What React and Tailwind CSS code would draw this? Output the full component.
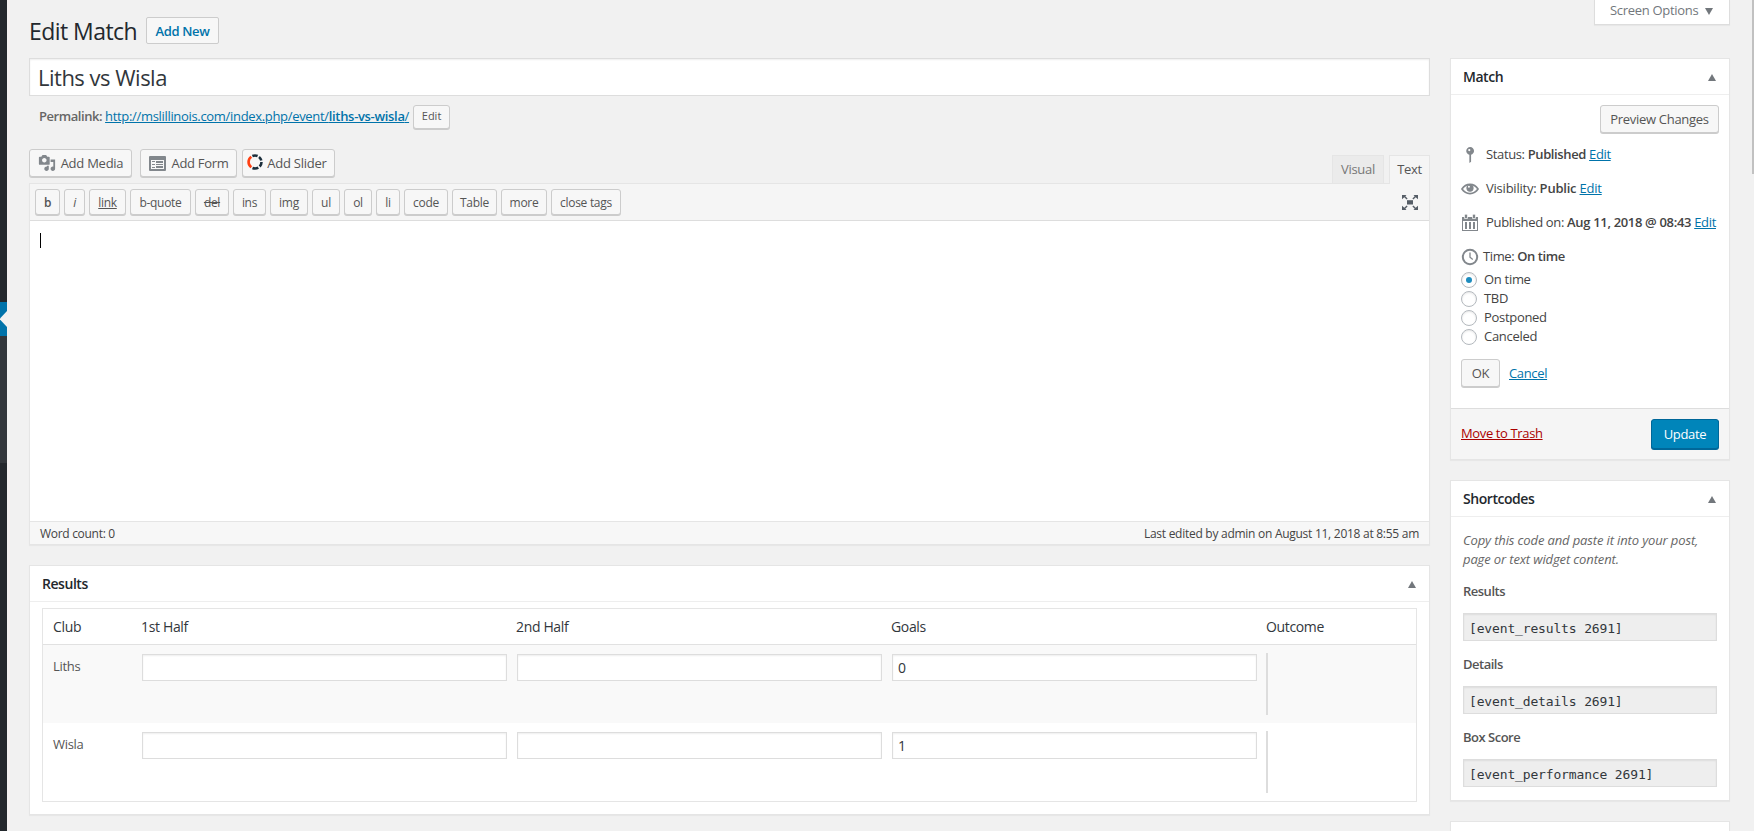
import React, { useState } from 'react';

const quickTags = [
  { label: 'b', width: 'w-[25px]', style: 'font-semibold' },
  { label: 'i', width: 'w-[21px]', style: 'italic' },
  { label: 'link', width: 'w-[37px]', style: 'underline' },
  { label: 'b-quote', width: 'w-[61px]' },
  { label: 'del', width: 'w-[34px]', style: 'line-through' },
  { label: 'ins', width: 'w-[33px]' },
  { label: 'img', width: 'w-[38px]' },
  { label: 'ul', width: 'w-[28px]' },
  { label: 'ol', width: 'w-[28px]' },
  { label: 'li', width: 'w-[24px]' },
  { label: 'code', width: 'w-[44px]' },
  { label: 'Table', width: 'w-[45px]' },
  { label: 'more', width: 'w-[46px]' },
  { label: 'close tags', width: 'w-[70px]' },
];

const clubs = [
  { name: 'Liths', first: '', second: '', goals: '0' },
  { name: 'Wisla', first: '', second: '', goals: '1' },
];

const statuses = ['On time', 'TBD', 'Postponed', 'Canceled'];

const shortcodes = [
  { label: 'Results', code: '[event_results 2691]' },
  { label: 'Details', code: '[event_details 2691]' },
  { label: 'Box Score', code: '[event_performance 2691]' },
];

const button = 'flex items-center justify-center rounded-[3px] border border-[#ccc] bg-[#f7f7f7] text-[#555] shadow-[0_1px_0_#ccc] whitespace-nowrap';
const box = 'border border-[#e5e5e5] bg-white shadow-[0_1px_1px_rgba(0,0,0,0.04)]';
const field = 'block border border-[#ddd] shadow-[inset_0_1px_2px_rgba(0,0,0,0.07)] text-[#32373c] outline-none';
const link = 'text-[#0073aa] underline';

function MediaIcon() {
  return (
    <svg width="18" height="18" viewBox="0 0 20 20" fill="#82878c" className="shrink-0">
      <path fillRule="evenodd" d="M13 11V4c0-.55-.45-1-1-1h-1.67L9 1H5L3.67 3H2c-.55 0-1 .45-1 1v7c0 .55.45 1 1 1h10c.55 0 1-.45 1-1zM7 4.500c1.380 0 2.500 1.120 2.500 2.500S8.380 9.500 7 9.500 4.500 8.380 4.500 7 5.620 4.500 7 4.500z" />
      <path d="M14 6h5v10.500c0 1.380-1.120 2.500-2.500 2.500S14 17.880 14 16.500s1.120-2.500 2.500-2.500c.170 0 .340.020.500.050V9h-3V6zm-4 8.050V13h2v3.500c0 1.380-1.120 2.500-2.500 2.500S7 17.880 7 16.500 8.120 14 9.500 14c.170 0 .340.020.500.050z" />
    </svg>
  );
}

function FormIcon() {
  return (
    <svg width="17" height="15" viewBox="0 0 17 15" className="shrink-0">
      <rect width="17" height="15" rx="1" fill="#82878c" />
      <path d="M2 4h13v9H2z" fill="#f7f7f7" />
      <path d="M3 5h3v1H3zM3 8h3v1H3zM3 11h3v1H3zM7 5h7v2H7zM7 8h7v1H7zM7 10h7v2H7z" fill="#82878c" />
    </svg>
  );
}

function SliderIcon() {
  return (
    <svg width="16" height="16" viewBox="0 0 16 16" fill="none" strokeWidth="2.600" className="mb-[3px] shrink-0">
      <path d="M4.300 2.700A6.500 6.500 0 0 0 4.300 13.300" stroke="#ff4013" />
      <path d="M5.400 2A6.500 6.500 0 0 1 10.600 2M12 2.900A6.500 6.500 0 0 1 14.300 6.500M14.500 8A6.500 6.500 0 0 1 12.700 12.500M11.300 13.600A6.500 6.500 0 0 1 5.500 14" stroke="#1b2e3c" />
    </svg>
  );
}

function PinIcon() {
  return (
    <svg width="18" height="18" viewBox="0 0 20 20" fill="#82878c">
      <path fillRule="evenodd" d="M14.500 5.500c0 1.900-1.500 3.600-3.300 4.100V17.500L9.300 19V9.600C7.300 9.100 5.800 7.400 5.800 5.500 5.800 3 7.800 1 10.200 1s4.300 2 4.300 4.500zM8 4.500c0 .7.500 1.200 1.200 1.200s1.200-.5 1.200-1.200-.5-1.200-1.200-1.200S8 3.800 8 4.500z" />
    </svg>
  );
}

function EyeIcon() {
  return (
    <svg width="18" height="18" viewBox="0 0 20 20" fill="#82878c">
      <path fillRule="evenodd" d="M19.700 9.400C17.700 6 14 3.900 10 3.900S2.300 6 .3 9.400L0 10l.3.600c2 3.400 5.700 5.500 9.700 5.500s7.700-2.100 9.700-5.500l.3-.600-.3-.600zM10 14.100c-3.100 0-6-1.600-7.700-4.100C3.600 8 5.700 6.600 8 6.100c-.9.600-1.500 1.700-1.500 2.900 0 1.900 1.600 3.500 3.500 3.500s3.500-1.600 3.500-3.500c0-1.200-.6-2.300-1.500-2.900 2.300.5 4.400 1.900 5.700 3.900-1.700 2.500-4.600 4.100-7.700 4.100z" />
      <circle cx="10" cy="9" r="4" />
      <circle cx="8.800" cy="7.500" r="1.100" fill="#fff" />
    </svg>
  );
}

function CalendarIcon() {
  return (
    <svg width="18" height="18" viewBox="0 0 18 18">
      <path d="M1 3h16v14H1z" fill="#82878c" />
      <path d="M2 7h14v9H2z" fill="#fff" />
      <path d="M4 8h2v7H4zM8 8h2v7H8zM12 8h2v7h-2z" fill="#82878c" />
      <path d="M3.500 1.500a1.500 1.500 0 0 1 3 0v3h-3zM11.500 1.500a1.500 1.500 0 0 1 3 0v3h-3z" fill="#82878c" stroke="#fff" strokeWidth=".7" />
    </svg>
  );
}

function ClockIcon() {
  return (
    <svg width="18" height="18" viewBox="0 0 18 18" fill="none" stroke="#82878c">
      <circle cx="9" cy="9" r="7.200" strokeWidth="2" />
      <path d="M9 4.500V9.300l2.800 2.200" strokeWidth="1.300" />
    </svg>
  );
}

function FullscreenIcon() {
  return (
    <svg width="16" height="15" viewBox="0 0 16 15" fill="#555d66">
      <path d="M5 5.200h6v4.300H5z" />
      <path d="M0 0h4.500L3.300 1.300 5.600 3.600 4.600 4.600 2.300 2.200 0 4.300zM16 0v4.300l-2.300-2.100-2.300 2.400-1-1 2.300-2.300L11.500 0zM0 15v-4.300l2.300 2.100 2.300-2.400 1 1-2.300 2.300L4.500 15zM16 15h-4.500l1.200-1.300-2.300-2.300 1-1 2.300 2.400 2.300-2.100z" />
    </svg>
  );
}

function BoxHeader({ title }) {
  return (
    <div className="flex h-9 items-center justify-between border-b border-[#eee] pl-3 pr-[13px]">
      <h2 className="text-[14px] font-semibold leading-[20px] tracking-[-0.45px] text-[#23282d]">{title}</h2>
      <svg width="8" height="7" viewBox="0 0 8 7" fill="#72777c" className="mt-[2px]"><path d="M4 0l4 7H0z" /></svg>
    </div>
  );
}

function AdminMenu() {
  return (
    <div className="flex w-[7px] shrink-0 flex-col bg-[#23282d]">
      <div className="h-[302px]" />
      <div className="flex h-[34px] items-center bg-[#0073aa]">
        <svg width="7" height="16" viewBox="0 0 7 16" fill="#f1f1f1"><path d="M7 0v16L0 8.500v-1z" /></svg>
      </div>
      <div className="h-[127px] bg-[#32373c]" />
    </div>
  );
}

function Editor() {
  return (
    <div className="mt-5">
      <div className="flex h-[34px] items-start justify-between">
        <div className="flex text-[13px]">
          <button className={`${button} h-7 w-[103px] gap-[5px] tracking-[-0.25px]`}><MediaIcon /><span className="pt-px">Add Media</span></button>
          <button className={`${button} ml-2 h-7 w-[97px] gap-[6px] tracking-[-0.3px]`}><FormIcon /><span className="pt-px">Add Form</span></button>
          <button className={`${button} ml-[5px] h-7 w-[93px] gap-1 pr-[3px] tracking-[-0.25px]`}><SliderIcon /><span className="pt-px">Add Slider</span></button>
        </div>
        <div className="flex gap-[5px] self-end text-[13px]">
          <div className="mt-px flex h-[28px] w-[52px] items-center justify-center border border-b-0 border-[#e5e5e5] bg-[#ebebeb] tracking-[-0.3px] text-[#777]">Visual</div>
          <div className="relative top-px flex h-[29px] w-[41px] items-center justify-center border border-b-0 border-[#e5e5e5] bg-[#f5f5f5] tracking-[-0.3px] text-[#555]">Text</div>
        </div>
      </div>
      <div className={box}>
        <div className="flex h-[37px] items-center justify-between border-b border-[#ddd] bg-[#f5f5f5] pl-[5px] pr-[11px]">
          <div className="flex gap-1">
            {quickTags.map((tag) => (
              <button key={tag.label} className={`${button} h-[26px] pt-[2px] text-[12px] tracking-[-0.3px] ${tag.width} ${tag.style || ''}`}>{tag.label}</button>
            ))}
          </div>
          <FullscreenIcon />
        </div>
        <div className="h-[300px] pl-[10px] pt-3">
          <div className="h-[15px] w-px bg-black" />
        </div>
        <div className="flex h-[23px] items-center justify-between border-t border-[#e5e5e5] bg-[#f7f7f7] px-[10px] pt-[2px] text-[12px] text-[#444]">
          <span className="tracking-[-0.3px]">Word count: 0</span>
          <span className="tracking-[-0.27px]">Last edited by admin on August 11, 2018 at 8:55 am</span>
        </div>
      </div>
    </div>
  );
}

function ResultsBox() {
  return (
    <div className={`${box} mt-5 h-[250px]`}>
      <BoxHeader title="Results" />
      <div className="mx-3 mt-[6px] border border-[#e5e5e5]">
        <div className="grid h-9 grid-cols-[88px_375px_375px_375px_1fr] items-center border-b border-[#e1e1e1] pl-[10px] text-[14px] tracking-[-0.35px] text-[#32373c]">
          <span>Club</span>
          <span>1st Half</span>
          <span>2nd Half</span>
          <span>Goals</span>
          <span>Outcome</span>
        </div>
        {clubs.map((club) => (
          <div key={club.name} className="grid h-[78px] grid-cols-[89px_375px_375px_374px_1fr] pl-[10px] pt-2 text-[13px] tracking-[-0.3px] text-[#555] odd:bg-white even:bg-[#f9f9f9]">
            <span className="pt-1">{club.name}</span>
            <input className={`${field} mt-px h-[27px] w-[365px] bg-white px-[5px] text-[14px]`} defaultValue={club.first} />
            <input className={`${field} mt-px h-[27px] w-[365px] bg-white px-[5px] text-[14px]`} defaultValue={club.second} />
            <input className={`${field} mt-px h-[27px] w-[365px] bg-white px-[5px] text-[14px]`} defaultValue={club.goals} />
            <div className="h-[62px] w-[2px] bg-[#ddd]" />
          </div>
        ))}
      </div>
    </div>
  );
}

function MatchBox() {
  const [status, setStatus] = useState('On time');

  return (
    <div className={`${box} text-[13px] text-[#444]`}>
      <BoxHeader title="Match" />
      <div className="h-[313px] px-[10px] pt-[10px]">
        <div className="flex justify-end">
          <button className={`${button} h-7 w-[119px] pt-[2px] tracking-[-0.3px]`}>Preview Changes</button>
        </div>
        <div className="mt-[13px] flex h-[18px] items-center gap-[7px] tracking-[-0.37px]">
          <PinIcon /><span>Status: <b className="font-semibold">Published</b> <a className={link}>Edit</a></span>
        </div>
        <div className="mt-4 flex h-[18px] items-center gap-[7px] tracking-[-0.22px]">
          <EyeIcon /><span>Visibility: <b className="font-semibold">Public</b> <a className={link}>Edit</a></span>
        </div>
        <div className="mt-4 flex h-[18px] items-center gap-[7px] whitespace-nowrap tracking-[-0.33px]">
          <CalendarIcon /><span>Published on: <b className="font-semibold">Aug 11, 2018 @ 08:43</b> <a className={link}>Edit</a></span>
        </div>
        <div className="mt-4 flex h-[18px] items-center gap-1 tracking-[-0.4px]">
          <ClockIcon /><span>Time: <b className="font-semibold">On time</b></span>
        </div>
        <div className="mt-1">
          {statuses.map((item) => (
            <label key={item} className="flex h-[19px] items-center gap-[7px] tracking-[-0.3px]" onClick={() => setStatus(item)}>
              <span className="flex size-4 items-center justify-center rounded-full border border-[#b4b9be] bg-white shadow-[inset_0_1px_2px_rgba(0,0,0,0.1)]">
                {status === item && <span className="size-[6px] rounded-full bg-[#1e8cbe]" />}
              </span>
              <span className="pt-px">{item}</span>
            </label>
          ))}
        </div>
        <div className="mt-[13px] flex items-center gap-[9px]">
          <button className={`${button} h-7 w-[39px] pt-[2px] tracking-[-0.3px]`}>OK</button>
          <a className={`${link} pt-px tracking-[-0.35px]`}>Cancel</a>
        </div>
      </div>
      <div className="flex h-[51px] items-center justify-between border-t border-[#ddd] bg-[#f5f5f5] px-[10px]">
        <a className="tracking-[-0.37px] text-[#a00] underline">Move to Trash</a>
        <button className="h-[30px] w-[68px] rounded-[3px] border border-[#006799] bg-[#0085ba] pt-px font-medium tracking-[-0.3px] text-white shadow-[0_1px_0_#006799]">Update</button>
      </div>
    </div>
  );
}

function ShortcodesBox() {
  return (
    <div className={`${box} mt-5 h-[321px] text-[13px]`}>
      <BoxHeader title="Shortcodes" />
      <div className="px-3 pt-[14px]">
        <p className="whitespace-nowrap italic leading-[19px] tracking-[-0.13px] text-[#666]">Copy this code and paste it into your post,<br />page or text widget content.</p>
        {shortcodes.map((item) => (
          <div key={item.label} className="mb-[13px] mt-[13px]">
            <div className="h-[19px] font-semibold leading-[19px] tracking-[-0.5px] text-[#555]">{item.label}</div>
            <input className={`${field} mb-[14px] mt-3 h-7 w-[254px] bg-[#eee] px-[5px] pt-[2px] font-['DejaVu_Sans_Mono',monospace] text-[13px] tracking-[-0.15px]`} readOnly value={item.code} />
          </div>
        ))}
      </div>
    </div>
  );
}

function App() {
  return (
    <div className="flex h-[831px] w-[1754px] overflow-hidden bg-[#f1f1f1] font-['Open_Sans',sans-serif] text-[#444]">
      <AdminMenu />
      <main className="ml-[22px] w-[1401px] shrink-0">
        <div className="flex h-[58px] items-start pt-[17px]">
          <h1 className="w-[117px] whitespace-nowrap text-[23px] leading-[28px] tracking-[-0.55px] text-[#23282d]">Edit Match</h1>
          <a className="flex h-[27px] w-[73px] items-center justify-center rounded-[2px] border border-[#ccc] bg-[#f7f7f7] pt-[2px] text-[13px] font-semibold tracking-[-0.35px] text-[#0073aa]">Add New</a>
        </div>
        <input className={`${field} h-[38px] w-full bg-white px-2 text-[22px] tracking-[-0.5px]`} defaultValue="Liths vs Wisla" />
        <div className="mt-2 flex h-[25px] items-center pl-[10px] text-[13px]">
          <b className="mr-[3px] font-semibold tracking-[-0.45px] text-[#666]">Permalink:</b>
          <a className={`${link} tracking-[-0.32px]`}>http://mslillinois.com/index.php/event/<b className="font-semibold">liths-vs-wisla</b>/</a>
          <button className={`${button} ml-[4px] h-6 w-[37px] text-[11px]`}>Edit</button>
        </div>
        <Editor />
        <ResultsBox />
      </main>
      <aside className="ml-5 w-[280px] shrink-0">
        <div className="flex h-[58px] items-start justify-end">
          <button className="flex h-[25px] w-[136px] items-center border border-t-0 border-[#ddd] bg-white pb-[2px] pl-[15px] text-[13px] tracking-[-0.3px] text-[#72777c] shadow-[0_1px_1px_rgba(0,0,0,0.04)]">
            <span className="w-[95px] text-left">Screen Options</span>
            <svg width="8" height="7" viewBox="0 0 8 7" fill="#72777c"><path d="M0 0h8L4 7z" /></svg>
          </button>
        </div>
        <MatchBox />
        <ShortcodesBox />
        <div className={`${box} mt-5 h-9`} />
      </aside>
      <div className="ml-auto h-[174px] w-[2px] bg-[#c1c1c1]" />
    </div>
  );
}

export default App;
